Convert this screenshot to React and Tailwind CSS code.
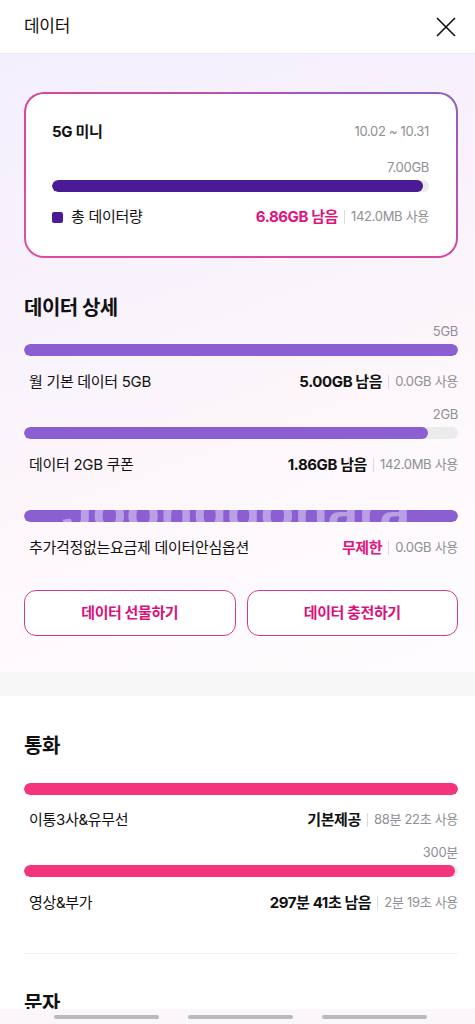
import React from "react";

const FONT = { fontFamily: 'Inter, "Noto Sans CJK KR", "Noto Sans", sans-serif' };

function Bar({ pct, color, children }) {
  return (
    <div className="relative w-full h-3 rounded-full bg-[#ebebeb] overflow-hidden">
      <div className={`h-full rounded-full ${color}`} style={{ width: pct + "%" }} />
      {children}
    </div>
  );
}

function Row({ label, main, mainClass = "text-[#111]", used }) {
  return (
    <div className="flex items-center justify-between pl-[5px] h-[22px]">
      <span className="text-[15px] text-[#111] tracking-[-0.3px]">{label}</span>
      <div className="flex items-center">
        <span className={`text-[15px] font-bold tracking-[-0.4px] ${mainClass}`}>{main}</span>
        <span className="mx-[6px] w-px h-[14px] bg-[#dcdcdc]" />
        <span className="text-[13px] text-[#8f8f94] tracking-[-0.3px]">{used}</span>
      </div>
    </div>
  );
}

function Cap({ children }) {
  return (
    <div className="text-right text-[13px] leading-[18px] text-[#8f8f94] tracking-[-0.3px]">{children}</div>
  );
}

export default function App() {
  return (
    <div className="w-[475px] min-h-[1024px] bg-white relative overflow-hidden" style={FONT}>
      {/* header */}
      <div className="h-[54px] flex items-center justify-between pl-[24px] pr-[18px] border-b border-[#ececf0] bg-white">
        <span className="text-[17px] text-[#111] tracking-[-0.3px]">데이터</span>
        <svg width="22" height="22" viewBox="0 0 22 22" fill="none" stroke="#111" strokeWidth="1.6">
          <path d="M2 2 L20 20 M20 2 L2 20" />
        </svg>
      </div>

      {/* data section */}
      <div className="pl-[24px] pr-[17px] pt-[38px] pb-[36px] bg-[linear-gradient(160deg,#f3effd_0%,#f8f2fc_35%,#fdf7fb_60%,#fefcfe_100%)]">
        <div className="rounded-[20px] p-[2px] bg-gradient-to-bl from-[#8b5dc2] via-[#d6469e] to-[#dd4f9d]">
          <div className="rounded-[18px] bg-white pl-[26px] pr-[27px] pt-[27px] pb-[28px]">
            <div className="flex items-center justify-between h-[22px]">
              <span className="text-[15px] font-bold text-[#111] tracking-[-0.3px]">5G 미니</span>
              <span className="text-[13px] text-[#8f8f94] tracking-[-0.3px]">10.02 ~ 10.31</span>
            </div>
            <div className="mt-[15px]"><Cap>7.00GB</Cap></div>
            <div className="mt-[4px]"><Bar pct={98.3} color="bg-[#4b1a96]" /></div>
            <div className="mt-[14px] flex items-center justify-between h-[22px]">
              <div className="flex items-center">
                <span className="w-[11px] h-[11px] rounded-[2px] bg-[#4b1a96]" />
                <span className="ml-[8px] text-[15px] text-[#111] tracking-[-0.3px]">총 데이터량</span>
              </div>
              <div className="flex items-center">
                <span className="text-[15px] font-bold text-[#e0147c] tracking-[-0.4px]">6.86GB 남음</span>
                <span className="mx-[6px] w-px h-[14px] bg-[#dcdcdc]" />
                <span className="text-[13px] text-[#8f8f94] tracking-[-0.3px]">142.0MB 사용</span>
              </div>
            </div>
          </div>
        </div>

        <div className="mt-[36px] text-[20px] leading-[28px] font-bold text-[#111] tracking-[-0.5px]">데이터 상세</div>
        <Cap>5GB</Cap>
        <div className="mt-[4px]"><Bar pct={100} color="bg-[#8b5fd2]" /></div>
        <div className="mt-[15px]"><Row label="월 기본 데이터 5GB" main="5.00GB 남음" used="0.0GB 사용" /></div>

        <div className="mt-[12px]"><Cap>2GB</Cap></div>
        <div className="mt-[4px]"><Bar pct={93} color="bg-[#8b5fd2]" /></div>
        <div className="mt-[15px]"><Row label="데이터 2GB 쿠폰" main="1.86GB 남음" used="142.0MB 사용" /></div>

        <div className="mt-[34px]">
          <Bar pct={100} color="bg-[#8b5fd2]">
            <svg className="absolute left-0 top-0 pointer-events-none" width="434" height="12" viewBox="0 0 434 12" aria-hidden="true">
              <text x="38" y="20" fontSize="55" fontWeight="700" fill="#ffffff" fillOpacity="0.4" fontFamily="Liberation Sans, sans-serif">Joonggonara</text>
            </svg>
          </Bar>
        </div>
        <div className="mt-[15px]"><Row label="추가걱정없는요금제 데이터안심옵션" main="무제한" mainClass="text-[#e0147c]" used="0.0GB 사용" /></div>

        <div className="mt-[31px] grid grid-cols-2 gap-[11px]">
          <button className="h-[46px] rounded-[12px] border border-[#cf3b8d] bg-white text-[15px] font-bold text-[#d9127a] tracking-[-0.4px]">데이터 선물하기</button>
          <button className="h-[46px] rounded-[12px] border border-[#cf3b8d] bg-white text-[15px] font-bold text-[#d9127a] tracking-[-0.4px]">데이터 충전하기</button>
        </div>
      </div>

      <div className="h-[24px] bg-[#f7f7f7]" />

      {/* call section */}
      <div className="pl-[24px] pr-[17px] pt-[36px] bg-white">
        <div className="text-[20px] leading-[28px] font-bold text-[#111] tracking-[-0.5px]">통화</div>
        <div className="mt-[23px]"><Bar pct={100} color="bg-[#f5357b]" /></div>
        <div className="mt-[14px]"><Row label="이통3사&유무선" main="기본제공" used="88분 22초 사용" /></div>
        <div className="mt-[12px]"><Cap>300분</Cap></div>
        <div className="mt-[4px]"><Bar pct={99.2} color="bg-[#f5357b]" /></div>
        <div className="mt-[15px]"><Row label="영상&부가" main="297분 41초 남음" used="2분 19초 사용" /></div>
        <div className="mt-[39px] h-px bg-[#f2f2f2]" />
        <div className="mt-[36px] text-[20px] leading-[28px] font-bold text-[#111] tracking-[-0.5px]">문자</div>
        <div className="h-[60px]" />
      </div>

      {/* bottom overlay */}
      <div className="absolute left-0 right-0 top-[1009px] h-[15px] bg-[#faf6fa] flex items-start justify-center gap-[29px] pt-[6px] pl-[5px]">
        <span className="w-[105px] h-[4px] rounded-full bg-[#b9b9b9]" />
        <span className="w-[105px] h-[4px] rounded-full bg-[#b9b9b9]" />
        <span className="w-[105px] h-[4px] rounded-full bg-[#b9b9b9]" />
      </div>
    </div>
  );
}
